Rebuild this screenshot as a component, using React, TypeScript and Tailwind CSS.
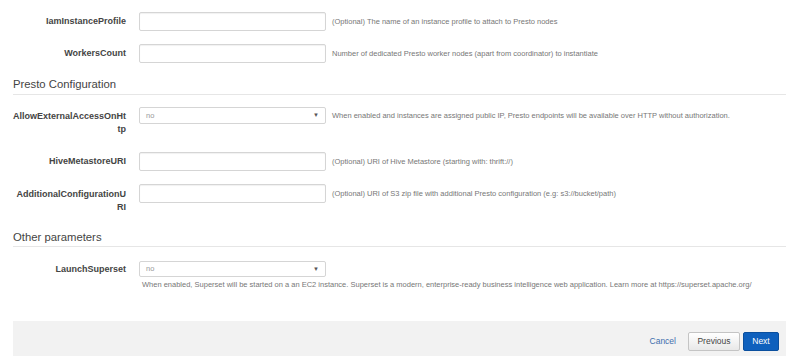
import React from "react";

const font = { fontFamily: '"Liberation Sans", Arial, sans-serif' };

const TextRow = ({ label, help, mt, pt = "pt-[3px]" }: { label: React.ReactNode; help: string; mt: string; pt?: string }) => (
  <div className={`flex items-start ${mt}`}>
    <div className={`w-[113px] shrink-0 text-right text-[9px] leading-[13px] font-bold text-[#444] ${pt}`}>{label}</div>
    <input
      type="text"
      className="ml-[13px] h-[19px] w-[187px] shrink-0 rounded-[2px] border border-[#d5d5d5] bg-white shadow-[inset_0_1px_1px_rgba(0,0,0,0.06)] outline-none"
    />
    <p className="ml-[6px] text-[7.5px] leading-[19px] text-[#777]">{help}</p>
  </div>
);

const SelectBox = ({ h }: { h: string }) => (
  <div className={`ml-[13px] flex ${h} w-[187px] shrink-0 items-center justify-between rounded-[2px] border border-[#d5d5d5] bg-white px-[6px]`}>
    <span className="text-[7.5px] text-[#999]">no</span>
    <span className="text-[6px] text-[#555]">▼</span>
  </div>
);

const Heading = ({ title, mt, pb }: { title: string; mt: string; pb: string }) => (
  <div className={`${mt} ${pb} border-b border-[#e6e6e6] text-[11.3px] leading-[13px] text-[#444]`}>{title}</div>
);

export default function App() {
  return (
    <div className="h-[363px] w-[793px] overflow-hidden bg-white" style={font}>
      <div className="ml-[13px] w-[773px]">
        <TextRow
          mt="mt-[12px]"
          label="IamInstanceProfile"
          help="(Optional) The name of an instance profile to attach to Presto nodes"
        />
        <TextRow
          mt="mt-[13px]"
          label="WorkersCount"
          help="Number of dedicated Presto worker nodes (apart from coordinator) to instantiate"
        />

        <Heading title="Presto Configuration" mt="mt-[15px]" pb="pb-[3px]" />

        <div className="mt-[12px] flex items-start">
          <div className="w-[113px] shrink-0 pt-[3px] text-right text-[9px] leading-[13px] font-bold text-[#444]">
            AllowExternalAccessOnHt
            <br />
            tp
          </div>
          <SelectBox h="h-[17px]" />
          <p className="ml-[6px] text-[7.5px] leading-[17px] text-[#777]">
            When enabled and instances are assigned public IP, Presto endpoints will be available over HTTP without authorization.
          </p>
        </div>

        <TextRow
          mt="mt-[16px]"
          label="HiveMetastoreURI"
          help="(Optional) URI of Hive Metastore (starting with: thrift://)"
        />
        <TextRow
          mt="mt-[13px]"
          pt="pt-[4px]"
          label={
            <>
              AdditionalConfigurationU
              <br />
              RI
            </>
          }
          help="(Optional) URI of S3 zip file with additional Presto configuration (e.g: s3://bucket/path)"
        />

        <Heading title="Other parameters" mt="mt-[17px]" pb="pb-[2px]" />

        <div className="mt-[14px] flex items-start">
          <div className="w-[113px] shrink-0 pt-[2px] text-right text-[9px] leading-[13px] font-bold text-[#444]">
            LaunchSuperset
          </div>
          <div className="flex flex-col">
            <SelectBox h="h-[16px]" />
            <p className="ml-[16px] mt-[3px] whitespace-nowrap text-[7.5px] leading-[9px] text-[#777]">
              When enabled, Superset will be started on a an EC2 instance. Superset is a modern, enterprise-ready business intelligence web application. Learn more at https://superset.apache.org/
            </p>
          </div>
        </div>

        <div className="mt-[32px] flex h-[35px] items-start justify-end bg-[#f2f2f2] pr-[7px] pt-[11px]">
          <button className="mt-[3px] text-[8.5px] leading-[13px] text-[#3f6fae]">Cancel</button>
          <button className="ml-[12px] h-[19px] w-[52px] rounded-[2px] border border-[#c4c4c4] bg-gradient-to-b from-white to-[#e8e8e8] text-[8.5px] text-[#444]">
            Previous
          </button>
          <button className="ml-[3px] h-[19px] w-[36px] rounded-[2px] border border-[#0a4f9e] bg-[#0e60bd] text-[8.5px] text-white">
            Next
          </button>
        </div>
      </div>
    </div>
  );
}
